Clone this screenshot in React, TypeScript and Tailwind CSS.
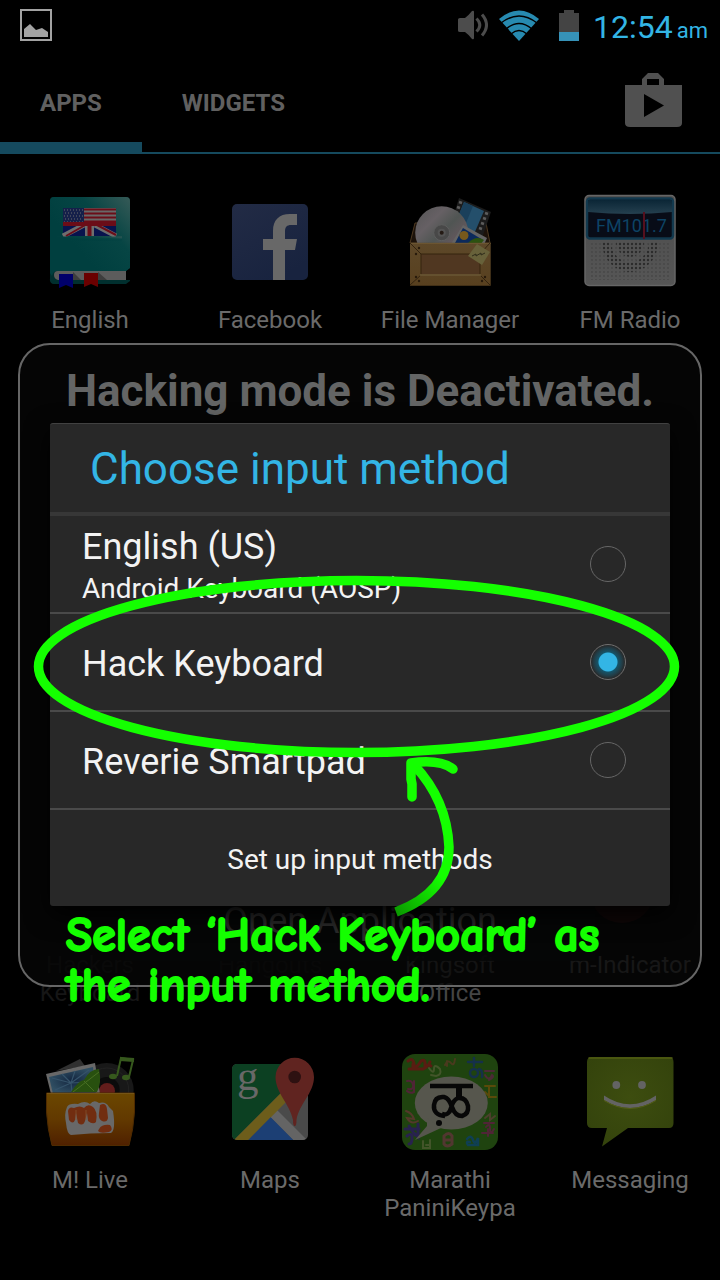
import React, { useState } from "react";

function EnglishIcon() {
  return (
    <svg viewBox="0 0 96 96" className="size-24" aria-hidden="true">
      <defs>
        <linearGradient id="book" x1="0.3" y1="0.6" x2="1" y2="0">
          <stop offset="0" stopColor="#003f3f" />
          <stop offset="0.5" stopColor="#064544" />
          <stop offset="1" stopColor="#365a57" />
        </linearGradient>
      </defs>
      <path d="M8 7a4 4 0 0 1 4-4h72a4 4 0 0 1 4 4v80l-4 3H12a4 4 0 0 1-4-5z" fill="#002f2e" />
      <path d="M84 77L89 73V86H84z" fill="#000" />
      <path d="M12 3h72a4 4 0 0 1 4 4v67l-4 3H15q-4 0-5 5l-2-3V7a4 4 0 0 1 4-4z" fill="url(#book)" />
      <path d="M16 77h68v9H16q-4-1-4-5t4-4z" fill="#5c5c5c" />
      <path d="M31 78l8 8h-8zM56 78l9 8h-9z" fill="#3d3d3d" />
      <rect x="21" y="14" width="53" height="28" fill="#686868" />
      <path d="M42 15.500h32M42 19.500h32M42 23.500h32M42 27.500h32" stroke="#6b0d18" strokeWidth="2" />
      <rect x="21" y="14" width="21" height="15" fill="#15204a" />
      <path d="M22 16h19M23 19h18M22 22h19M23 25h18M22 28h19" stroke="#6a6a6a" strokeDasharray="1 2" />
      <path d="M21 31h53v11H21z" fill="#08134d" />
      <path d="M21 42L42 31M74 42L53 31" stroke="#6e6e6e" strokeWidth="5" />
      <path d="M24 42L45 30M74 41L55 31" stroke="#6b0d18" strokeWidth="2" />
      <path d="M47.500 31v11" stroke="#6e6e6e" strokeWidth="9" />
      <path d="M47.500 29v13M21 30h53" stroke="#6b0d18" strokeWidth="4" />
      <path d="M17 80h14v14l-7-3-7 3z" fill="#00006a" />
      <path d="M42 79h14v14l-7-3-7 3z" fill="#6a0000" />
      <path d="M15 42.500h65v4H15z" fill="url(#book)" />
    </svg>
  );
}

function FacebookIcon() {
  return (
    <svg viewBox="0 0 96 96" className="size-24" aria-hidden="true">
      <defs>
        <linearGradient id="fb" x1="0" y1="0" x2="0.6" y2="1">
          <stop offset="0" stopColor="#222b45" />
          <stop offset="1" stopColor="#18233f" />
        </linearGradient>
      </defs>
      <rect x="10" y="10" width="76" height="76" rx="5" fill="url(#fb)" />
      <path d="M51 86V56H41V45H51V37C51 26 57 20 68 20H75V31H69C65 31 63 33 63 37V45H75L73 56H63V86Z" fill="#686868" />
    </svg>
  );
}

function FileManagerIcon() {
  return (
    <svg viewBox="0 0 96 96" className="size-24" aria-hidden="true">
      <defs>
        <linearGradient id="disc" x1="0" y1="0" x2="1" y2="1">
          <stop offset="0" stopColor="#555" />
          <stop offset="0.3" stopColor="#666064" />
          <stop offset="0.5" stopColor="#505553" />
          <stop offset="0.75" stopColor="#67585f" />
          <stop offset="1" stopColor="#555" />
        </linearGradient>
        <linearGradient id="wood" x1="0" y1="0" x2="0" y2="1">
          <stop offset="0" stopColor="#5d4829" />
          <stop offset="1" stopColor="#58401f" />
        </linearGradient>
      </defs>
      <path d="M8 49L13 29H84L88 49z" fill="#1c120a" stroke="#4d3820" />
      <path d="M57 4L89 18L79 47L49 30z" fill="#1b1b1b" />
      <path d="M62 8L82 17L72 40L54 28z" fill="#244f6b" />
      <path d="M62 8L71 12L62 34L54 28z" fill="#1a405b" />
      <path d="M57 8l3 1M55 13l3 1M53 18l3 1M86 20l-3-1M84 25l-3-1M82 30l-3-1M80 35l-3-1" stroke="#5c5c5c" strokeWidth="2.500" />
      <circle cx="39.700" cy="38.700" r="26.500" fill="url(#disc)" />
      <circle cx="39.700" cy="38.700" r="8" fill="#484848" stroke="#5e5e5e" />
      <circle cx="39.700" cy="38.700" r="4" fill="#545454" />
      <circle cx="39.700" cy="38.700" r="2" fill="#241a14" />
      <path d="M61 31L85 44L80 55L49 50z" fill="#646464" />
      <path d="M61 34L81 46L76 52L53 49z" fill="#0c2a5b" />
      <path d="M66 49Q74 41 82 46L78 51z" fill="#2c5210" />
      <circle cx="62" cy="41.500" r="4.500" fill="#77591c" />
      <path d="M8 48.700H88.700V91.700H8z" fill="url(#wood)" />
      <path d="M8 49.500H88.700" stroke="#6b5531" />
      <path d="M8 49L19 60M88 49L78 60M8 91L19 81M88 91L78 81" stroke="#33230f" />
      <rect x="19" y="60" width="59" height="21" fill="#503721" stroke="#35240f" />
      <path d="M18 81H79" stroke="#705c38" strokeWidth="1.500" />
      <g fill="#281b0c">
        <circle cx="14" cy="60" r="1.200" /><circle cx="17" cy="54" r="1.200" />
        <circle cx="14" cy="83" r="1.200" /><circle cx="17" cy="87" r="1.200" />
        <circle cx="80" cy="87" r="1.200" /><circle cx="83" cy="83" r="1.200" />
      </g>
      <path d="M75 50L88 58L80 71L66 62z" fill="#67613a" />
      <path d="M70 62l4-2 0 2 5-3 0 2 4-2" stroke="#2f2c1a" fill="none" />
    </svg>
  );
}

function RadioIcon() {
  return (
    <svg viewBox="0 0 96 96" className="size-24" aria-hidden="true">
      <defs>
        <linearGradient id="case" x1="0" y1="0" x2="0" y2="1">
          <stop offset="0" stopColor="#4c4c4c" />
          <stop offset="1" stopColor="#565656" />
        </linearGradient>
        <linearGradient id="gloss" x1="0" y1="0" x2="0" y2="1">
          <stop offset="0" stopColor="#0b2636" />
          <stop offset="1" stopColor="#25404f" />
        </linearGradient>
        <pattern id="holes" width="4" height="4" patternUnits="userSpaceOnUse">
          <circle cx="2" cy="2" r="0.900" fill="#454545" />
        </pattern>
        <pattern id="darkholes" width="4" height="4" patternUnits="userSpaceOnUse">
          <circle cx="2" cy="2" r="1.200" fill="#2b2b2b" />
        </pattern>
      </defs>
      <rect x="3" y="1.500" width="90" height="90" rx="4" fill="url(#case)" stroke="#666" strokeWidth="1.500" />
      <rect x="5" y="4.500" width="86" height="40" rx="3" fill="#080c17" stroke="#12394e" strokeWidth="2.500" />
      <path d="M6 6h84v12Q48 22 6 18z" fill="url(#gloss)" />
      <text x="14" y="38" fontFamily="Roboto, sans-serif" fontSize="18" fill="#0d4365">FM101.7</text>
      <path d="M62 18V45" stroke="#54101e" strokeWidth="2" />
      <rect x="8" y="48" width="80" height="38" fill="url(#holes)" />
      <path d="M20 48a28 30 0 0 0 56 0h-9a19 20 0 0 1-38 0z" fill="url(#darkholes)" />
      <path d="M34 48a14 15 0 0 0 28 0z" fill="url(#darkholes)" />
    </svg>
  );
}

function LiveIcon() {
  return (
    <svg viewBox="0 0 96 96" className="size-24" aria-hidden="true">
      <defs>
        <linearGradient id="pouch" x1="0" y1="0" x2="0" y2="1">
          <stop offset="0" stopColor="#6b4700" />
          <stop offset="0.5" stopColor="#623900" />
          <stop offset="1" stopColor="#4f2000" />
        </linearGradient>
        <radialGradient id="bluephoto">
          <stop offset="0" stopColor="#13253f" />
          <stop offset="1" stopColor="#304f63" />
        </radialGradient>
      </defs>
      <path d="M14 17L38 5L43 12z" fill="#303030" />
      <circle cx="64.700" cy="36" r="27" fill="#181818" />
      <circle cx="64.700" cy="36" r="22" fill="none" stroke="#222" />
      <circle cx="64.700" cy="36" r="13" fill="#0b0b0b" />
      <circle cx="65" cy="37" r="8" fill="#621d1b" />
      <path d="M4 20L53 9L58 40H9z" fill="#686868" />
      <path d="M7 23L51 13L54 40H11z" fill="url(#bluephoto)" />
      <path d="M29 29L10 24M29 29L20 20M29 29L33 17M29 29L47 16M29 29L13 36M29 29L30 39M29 29L50 28" stroke="#35536a" strokeWidth="1.200" />
      <path d="M29 38Q37 26 42 26Q48 15 57 15Q60 29 55 38z" fill="#28500f" />
      <path d="M31 38L57 18M42 27L52 37" stroke="#486f22" />
      <path d="M75 22L79 4L91 6L87 23" fill="none" stroke="#36581d" strokeWidth="2" />
      <path d="M78 5L92 6" stroke="#36581d" strokeWidth="4" />
      <ellipse cx="71" cy="22.500" rx="4" ry="2.700" fill="#36581d" />
      <ellipse cx="84" cy="23.500" rx="4" ry="2.700" fill="#36581d" />
      <path d="M4.500 39H92.500V58Q91.500 75 87 91.500H10Q5.500 75 4.500 58z" fill="url(#pouch)" stroke="#4f2b00" />
      <path d="M5 39.500H92" stroke="#755415" />
      <path d="M25 53Q27 49 36 50Q43 46 48 50Q52 45 57 49Q64 47 67 53L71 57Q74 76 69 79Q48 79 29 81Q25 80 24 69Q22 60 25 53z" fill="#686868" />
      <path d="M26 57Q27 52 32 54Q38 51 42 54Q46 49 51 53Q56 57 54 68Q51 71 46 67L45 59L43 67Q41 73 36 69L34 59L33 66Q31 71 27 66z" fill="#712d10" />
      <path d="M58 51Q64 48 65 55L66 64Q65 69 60 67Q56 65 57 59z" fill="#712d10" />
      <path d="M57 75Q60 70 68 71Q72 76 67 78Q58 80 56 77z" fill="#712d10" />
      <path d="M34 56v10M44 56v10" stroke="#84502f" strokeWidth="0.800" />
    </svg>
  );
}

function MapsIcon() {
  return (
    <svg viewBox="0 0 96 96" className="size-24" aria-hidden="true">
      <defs>
        <clipPath id="mapclip"><rect x="10" y="10" width="76" height="76" rx="5" /></clipPath>
      </defs>
      <g clipPath="url(#mapclip)">
        <rect x="10" y="10" width="76" height="76" fill="#4a4a4a" />
        <path d="M10 10H86V12L12 86H10z" fill="#0c4022" />
        <path d="M48 63L55 56L90 91H76z" fill="#646464" />
        <path d="M12 86L60 38L70 42L26.300 86z" fill="#6d5d1b" />
        <path d="M26.300 86L48.700 63.300L71.300 86z" fill="#1c3f74" />
      </g>
      <text x="15" y="36" fontFamily="'Liberation Serif', serif" fontSize="43" fill="#686868">g</text>
      <path d="M72.700 72Q71 72 71 66C68 50 53.500 39 53.500 23A19.200 19.200 0 0 1 92 23C92 39 77 50 74.500 66Q74.500 72 72.700 72z" fill="#602420" />
      <circle cx="72.700" cy="23" r="6.300" fill="#2e1111" />
    </svg>
  );
}

function MarathiIcon() {
  return (
    <svg viewBox="0 0 96 96" className="size-24" aria-hidden="true">
      <rect width="96" height="96" rx="13" fill="#1f430f" />
      <g fill="none" strokeWidth="2" strokeLinecap="round">
        <path d="M6 7q5-4 6 3t7-3q5-3 4 6q4-3 6-1M7 15h14q5-2 7-7M11 10v5" stroke="#581d12" strokeWidth="3" />
        <path d="M43 11q3-6 6-2t4-4M45 7v5" stroke="#4a3a1e" />
        <path d="M27 14q5 7 5 1t6 0q2 6-4 7l-5-1" stroke="#43552a" />
        <path d="M66 8h14M72 4v8M68 19a4 4 0 1 1 8 0a4 4 0 1 1-8 0M77 15q4 1 3 8" stroke="#15304a" strokeWidth="2.500" />
        <path d="M83 17h9M83 21q4 7 7 0q3 2-3 5" stroke="#4c2a36" />
        <path d="M5 27q5-1 6 4t-5 4M12 27v11q-4 2-7-1" stroke="#502436" />
        <path d="M83 32h10M87 32v11h7M83 38l4 4" stroke="#5a4a0a" />
        <path d="M4 57q6 2 8 8l-7-1q4 7 11 3" stroke="#54382a" />
        <path d="M3 75h14M7 72l6 9M5 82q5-4 5 2t-3 6M16 70v13l-4-4" stroke="#28224e" strokeWidth="3" />
        <path d="M82 69h10M84 73q4-5 4 2t4 0M80 79h11M86 75v7" stroke="#502436" />
        <path d="M42 82q5-5 8 0v8q-5 4-8 0zM42 86h8" stroke="#523730" strokeWidth="3" />
        <path d="M65 85q4-5 6 1t5-2v7H66q-3-4 2-3" stroke="#0f3f54" strokeWidth="2.500" />
        <path d="M21 87v7h7v-8M24 91h4" stroke="#43552a" />
        <path d="M83 64l5-4v6l5-4" stroke="#4c3f2c" />
      </g>
      <ellipse cx="49.300" cy="49" rx="36.500" ry="26.500" fill="#56564d" />
      <path d="M25 64L25 72L13 86L39 74z" fill="#56564d" />
      <g fill="none" stroke="#070707">
        <path d="M28 32H71" strokeWidth="4.500" />
        <path d="M57 32V43" strokeWidth="6" />
        <path d="M43 62Q31 61 32 51Q33 42 42 43Q47 44 50 53Q53 62 60 62Q67 60 66 52Q64 43 56 44Q51 46 49 54Q47 62 40 60" strokeWidth="4.500" />
      </g>
      <circle cx="37" cy="69" r="3" fill="#070707" />
    </svg>
  );
}

function MessagingIcon() {
  return (
    <svg viewBox="0 0 96 96" className="size-24" aria-hidden="true">
      <defs>
        <radialGradient id="msg" cx="0.5" cy="0.45" r="0.7">
          <stop offset="0" stopColor="#3d4d0f" />
          <stop offset="1" stopColor="#33420c" />
        </radialGradient>
      </defs>
      <path d="M10 3H87Q91.500 3 91.500 8V69Q91.500 74 87 74H46L20 92.500L25 74H10Q5 74 5 69V8Q5 3 10 3z" fill="url(#msg)" />
      <path d="M7 4H90" stroke="#525d12" strokeWidth="1.500" strokeLinecap="round" />
      <circle cx="34.300" cy="31" r="3.900" fill="#636363" />
      <circle cx="60" cy="31" r="3.900" fill="#636363" />
      <path d="M22 41.500Q48 59 74 41.500V46Q48 62 22 46z" fill="#636363" />
      <path d="M22 46.500Q48 62.500 74 46.500" stroke="#535e17" fill="none" />
    </svg>
  );
}

function IndicatorIcon() {
  return (
    <svg viewBox="0 0 96 96" className="size-24" aria-hidden="true">
      <circle cx="40" cy="52" r="32" fill="#3a0a0d" />
      <circle cx="40" cy="46" r="20" fill="#0b0b0b" />
    </svg>
  );
}

function Blank() {
  return <span className="block size-24" />;
}

type Entry = { name: string; icon: () => React.ReactElement; tone: string };

const topApps: Entry[] = [
  { name: "English", icon: EnglishIcon, tone: "text-[#6a6a6a]" },
  { name: "Facebook", icon: FacebookIcon, tone: "text-[#6a6a6a]" },
  { name: "File Manager", icon: FileManagerIcon, tone: "text-[#6a6a6a]" },
  { name: "FM Radio", icon: RadioIcon, tone: "text-[#6a6a6a]" },
];

const bottomApps: Entry[] = [
  { name: "Hackers\nKeyboard", icon: Blank, tone: "text-[#161616]" },
  { name: "Hangouts", icon: Blank, tone: "text-[#101010]" },
  { name: "Kingsoft\nOffice", icon: Blank, tone: "text-[#454545]" },
  { name: "m-Indicator", icon: IndicatorIcon, tone: "text-[#5a5a5a]" },
  { name: "M! Live", icon: LiveIcon, tone: "text-[#6a6a6a]" },
  { name: "Maps", icon: MapsIcon, tone: "text-[#6a6a6a]" },
  { name: "Marathi\nPaniniKeypa", icon: MarathiIcon, tone: "text-[#6a6a6a]" },
  { name: "Messaging", icon: MessagingIcon, tone: "text-[#6a6a6a]" },
];

function AppRows({ apps }: { apps: Entry[] }) {
  return (
    <div className="grid auto-rows-[215px] grid-cols-4">
      {apps.map(({ name, icon: Icon, tone }) => (
        <button key={name} type="button" className="flex flex-col items-center gap-4">
          <Icon />
          <span className={"whitespace-pre text-center text-[24px] leading-7 " + tone}>{name}</span>
        </button>
      ))}
    </div>
  );
}

function StatusBar() {
  return (
    <header className="flex h-[50px] items-center justify-between pl-5 pr-3">
      <svg viewBox="0 0 32 32" className="size-8" aria-hidden="true">
        <rect x="1" y="1" width="30" height="30" fill="none" stroke="#a3a3a3" strokeWidth="2" />
        <path d="M4 20L10 15L16 21L22 19L28 23V28H4z" fill="#a3a3a3" />
      </svg>
      <div className="flex items-center">
        <svg viewBox="0 0 30 30" className="mr-[11px] size-[30px]" aria-hidden="true">
          <path d="M0 9.500Q0 8 2 8H7Q10 6 14 1Q16 0 16 2V28Q16 30 14 29Q10 24 7 22H2Q0 22 0 20.500z" fill="#4c4c4c" />
          <path d="M18.500 8.500Q25 15 18.500 21.500M24 4.500Q33 15 24 25.500" fill="none" stroke="#4c4c4c" strokeWidth="3" />
        </svg>
        <svg viewBox="0 0 40 31" className="mr-5 h-[31px] w-10" aria-hidden="true">
          <path d="M0 9Q20 -8 40 9L20 31z" fill="#278ab0" />
          <path d="M2 13Q20 -1 38 13M7 19Q20 8 33 19M12 24Q20 17 28 24" fill="none" stroke="#000" strokeWidth="1.500" />
        </svg>
        <svg viewBox="0 0 20 31" className="mr-3.5 h-[31px] w-5" aria-hidden="true">
          <path d="M5 0H15V3H20V22H0V3H5z" fill="#444" />
          <path d="M0 22H20V31H0z" fill="#3692b8" />
        </svg>
        <time className="flex items-baseline gap-1 pt-1 text-[#33b5e5]">
          <span className="text-[32px] leading-[46px]">12:54</span>
          <span className="text-[22px]">am</span>
        </time>
      </div>
    </header>
  );
}

function TabBar() {
  return (
    <nav className="flex h-[104px] border-b-2 border-[#154a5e] text-[24px] font-bold text-[#606060]">
      <button type="button" className="-mb-0.5 border-b-12 border-[#154a5e] px-10 pt-3.5">APPS</button>
      <button type="button" className="px-10 pt-1">WIDGETS</button>
      <button type="button" aria-label="Play Store" className="ml-auto pb-0.5 pr-[38px]">
        <svg viewBox="0 0 57 54" className="h-[54px] w-[57px]" aria-hidden="true">
          <path d="M17 12V6L23 0H33L39 6V12H57V50Q57 54 52 54H5Q0 54 0 50V12zM22 12H34V6H22zM19 21V44L39 32.500z" fill="#505050" fillRule="evenodd" />
        </svg>
      </button>
    </nav>
  );
}

const methods = [
  { id: "aosp", title: "English (US)", detail: "Android Keyboard (AOSP)" },
  { id: "hack", title: "Hack Keyboard", detail: "" },
  { id: "reverie", title: "Reverie Smartpad", detail: "" },
];

function InputMethodDialog() {
  const [chosen, setChosen] = useState("hack");
  return (
    <section
      role="dialog"
      aria-labelledby="dialog-title"
      className="absolute inset-x-[50px] top-[423px] rounded-[3px] border-t border-[#414141] bg-[#282828] text-[#f3f3f3] shadow-[0_8px_24px_#000]"
    >
      <h2 id="dialog-title" className="border-b-4 border-[#373737] px-10 pt-0.5 text-[44px] leading-[86px] text-[#33b5e5]">
        Choose input method
      </h2>
      {methods.map((method) => (
        <label key={method.id} className="flex h-[98px] items-center justify-between border-b-2 border-[#4a4a4a] pl-8 pr-[44px]">
          <span className="flex flex-col pt-1">
            <span className="text-[36px] leading-[46px]">{method.title}</span>
            {method.detail && <span className="text-[28px] leading-[38px]">{method.detail}</span>}
          </span>
          <input
            type="radio"
            name="input-method"
            checked={chosen === method.id}
            onChange={() => setChosen(method.id)}
            className="size-9 appearance-none rounded-full border border-[#666] checked:border-[#707070] checked:bg-[radial-gradient(circle,#33b5e5_9px,#155469_10px,#223d47_14px,#282828_17px)]"
          />
        </label>
      ))}
      <button type="button" className="block h-[96px] w-full rounded-b-[3px] pt-1 text-[28px]">
        Set up input methods
      </button>
    </section>
  );
}

function Annotation() {
  return (
    <>
      <svg viewBox="0 0 720 360" className="pointer-events-none absolute inset-x-0 top-[565px] w-full" aria-hidden="true">
        <defs>
          <linearGradient id="tail" gradientUnits="userSpaceOnUse" x1="396" y1="347" x2="440" y2="310">
            <stop offset="0" stopColor="#0a9a00" />
            <stop offset="1" stopColor="#14ff00" />
          </linearGradient>
        </defs>
        <ellipse cx="356.500" cy="101.500" rx="318" ry="86" fill="none" stroke="#14ff00" strokeWidth="9.500" />
        <path d="M414 200Q447 235 449 282Q449 327 396 347" fill="none" stroke="url(#tail)" strokeWidth="9.500" />
        <path d="M412 232V219L411 214V198Q440 194 453 204" fill="none" stroke="#14ff00" strokeWidth="9.500" strokeLinecap="round" strokeLinejoin="round" />
      </svg>
      <p className="pointer-events-none absolute left-[66px] right-5 top-[911px] font-['Comic_Sans_MS','Comic_Neue',Lato,sans-serif] text-[48px] font-bold leading-[50px] text-[#14ff00] [-webkit-text-stroke:2px_#14ff00]">
        Select ‘Hack Keyboard’ as
        <br />
        the input method.
      </p>
    </>
  );
}

export default function App() {
  return (
    <div className="relative min-h-screen overflow-hidden bg-black font-[Roboto,sans-serif]">
      <StatusBar />
      <TabBar />
      <main className="flex flex-col gap-[430px] pt-10">
        <AppRows apps={topApps} />
        <AppRows apps={bottomApps} />
      </main>
      <section className="absolute inset-x-[18px] top-[343px] flex min-h-[644px] flex-col items-center justify-between rounded-[32px] border-2 border-[#666] bg-[#060606]/80 pb-6 pt-4">
        <h1 className="text-[44px] font-bold leading-[60px] text-[#646565]">Hacking mode is Deactivated.</h1>
        <button type="button" className="mx-auto h-[80px] w-[470px] max-w-full bg-[#050606]/80 text-[36px] text-[#2a2a2a]">
          Open Application
        </button>
      </section>
      <InputMethodDialog />
      <Annotation />
    </div>
  );
}
